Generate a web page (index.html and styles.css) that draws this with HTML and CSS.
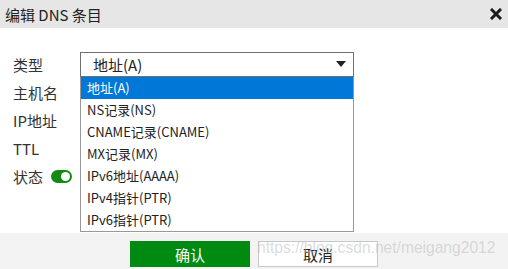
FILE: index.html
```html
<!DOCTYPE html>
<html lang="zh-CN">

<head>
    <meta charset="UTF-8">
    <meta name="viewport" content="width=device-width, initial-scale=1.0">
    <link rel="stylesheet" href="styles.css">
    <title>编辑 DNS 条目</title>
</head>

<body>
    <div class="dialog">
        <div class="head">
            <span class="title">编辑 DNS 条目</span>
            <svg class="close" width="12" height="12" viewBox="0 0 12 12">
                <path d="M2 2L10 10M10 2L2 10" stroke="#1a1a1a" stroke-width="3" stroke-linecap="square" />
            </svg>
        </div>
        <div class="body">
            <div class="row">
                <label class="label">类型</label>
                <div class="select">
                    <div class="select-box">
                        <span>地址(A)</span>
                        <svg class="arrow" width="10" height="6" viewBox="0 0 10 6">
                            <path d="M0 0H10L5 6Z" fill="#222" />
                        </svg>
                    </div>
                    <ul class="options">
                        <li class="active">地址(A)</li>
                        <li>NS记录(NS)</li>
                        <li>CNAME记录(CNAME)</li>
                        <li>MX记录(MX)</li>
                        <li>IPv6地址(AAAA)</li>
                        <li>IPv4指针(PTR)</li>
                        <li>IPv6指针(PTR)</li>
                    </ul>
                </div>
            </div>
            <div class="row"><label class="label">主机名</label></div>
            <div class="row"><label class="label">IP地址</label></div>
            <div class="row"><label class="label">TTL</label></div>
            <div class="row">
                <label class="label">状态</label>
                <span class="switch"><span class="knob"></span></span>
            </div>
        </div>
        <div class="foot">
            <button class="btn ok">确认</button>
            <button class="btn cancel">取消</button>
            <span class="mark">https://blog.csdn.net/meigang2012</span>
        </div>
    </div>
</body>

</html>
```

FILE: styles.css
```css
* {
    margin: 0;
    padding: 0;
    box-sizing: border-box;
}

ul,
li {
    list-style: none;
}

body {
    width: 508px;
    height: 269px;
    overflow: hidden;
    font-family: "Noto Sans CJK SC", "Noto Sans", sans-serif;
    color: #333;
    background: #fff;
}

.dialog {
    width: 508px;
    height: 269px;
    display: flex;
    flex-direction: column;
}

.head {
    height: 28px;
    background: #e6e6e6;
    display: flex;
    align-items: center;
    justify-content: space-between;
    padding: 0 6px 0 5px;
}

.title {
    font-size: 15px;
    color: #222;
}

.body {
    flex: 1;
    padding: 22px 0 0 13px;
}

.row {
    height: 28px;
    display: flex;
    align-items: center;
}

.label {
    width: 67px;
    font-size: 15px;
    color: #333;
}

.row:last-child .label {
    width: 38px;
}

.select {
    position: relative;
    width: 274px;
}

.select-box {
    height: 25px;
    border: 1px solid #707070;
    display: flex;
    align-items: center;
    justify-content: space-between;
    padding: 0 7px 0 12px;
    font-size: 15px;
    color: #222;
}

.options {
    position: absolute;
    top: 100%;
    left: 0;
    width: 274px;
    background: #fff;
    border: 1px solid #999;
    border-top: none;
    z-index: 2;
}

.options li {
    height: 22px;
    line-height: 22px;
    padding-left: 6px;
    font-size: 13px;
    color: #222;
}

.options li.active {
    background: #0078d7;
    color: #fff;
}

.switch {
    width: 21px;
    height: 13px;
    border-radius: 7px;
    background: #138a13;
    display: flex;
    align-items: center;
    justify-content: flex-end;
    padding-right: 2px;
}

.knob {
    width: 9px;
    height: 9px;
    border-radius: 50%;
    background: #fff;
}

.foot {
    position: relative;
    height: 36px;
    background: #f3f3f3;
    display: flex;
    justify-content: center;
    align-items: flex-start;
    gap: 8px;
    padding-top: 8px;
}

.btn {
    width: 120px;
    height: 26px;
    font-family: "Noto Sans CJK SC", sans-serif;
    font-size: 15px;
}

.ok {
    background: #008a12;
    color: #fff;
    border: none;
}

.cancel {
    background: #fff;
    color: #222;
    border: 1px solid #c8c8c8;
}

.mark {
    position: absolute;
    left: 257px;
    top: 6px;
    font-family: "Liberation Sans", Arial, sans-serif;
    font-size: 15.6px;
    color: rgba(190, 190, 190, 0.55);
    pointer-events: none;
}
```
